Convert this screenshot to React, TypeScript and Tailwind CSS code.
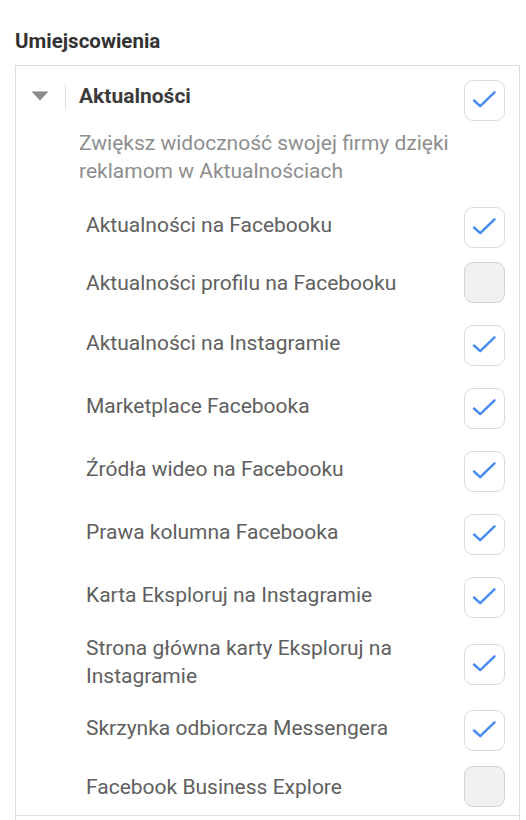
import React from "react";

interface Placement {
  label: string;
  checked: boolean;
  height: string;
}

const placements: Placement[] = [
  { label: "Aktualności na Facebooku", checked: true, height: "h-[47px]" },
  { label: "Aktualności profilu na Facebooku", checked: false, height: "h-[63px]" },
  { label: "Aktualności na Instagramie", checked: true, height: "h-[63px]" },
  { label: "Marketplace Facebooka", checked: true, height: "h-[63px]" },
  { label: "Źródła wideo na Facebooku", checked: true, height: "h-[63px]" },
  { label: "Prawa kolumna Facebooka", checked: true, height: "h-[63px]" },
  { label: "Karta Eksploruj na Instagramie", checked: true, height: "h-[63px]" },
  { label: "Strona główna karty Eksploruj na Instagramie", checked: true, height: "h-[70px]" },
  { label: "Skrzynka odbiorcza Messengera", checked: true, height: "h-[63px]" },
  { label: "Facebook Business Explore", checked: false, height: "h-[49px]" },
];

function Checkbox({ checked }: { checked: boolean }) {
  if (!checked) {
    return <div className="w-[41px] h-[41px] shrink-0 rounded-[9px] border border-[#d2d2d2] bg-[#f1f1f1]" />;
  }
  return (
    <div className="w-[41px] h-[41px] shrink-0 rounded-[9px] border border-[#dcdcdc] bg-white flex items-center justify-center">
      <svg width="41" height="41" viewBox="0 0 41 41" fill="none">
        <path
          d="M9.5 20.5 L16 26.5 L31 12"
          stroke="#4a8cf3"
          strokeWidth="2.6"
          strokeLinecap="round"
          strokeLinejoin="round"
        />
      </svg>
    </div>
  );
}

export default function App() {
  return (
    <div className="bg-white min-h-[820px] pt-[27px] font-['Roboto',sans-serif]">
      <h2 className="pl-[15px] text-[20.5px] leading-[29px] font-bold text-[#333333]">Umiejscowienia</h2>

      <div className="mt-[9px] ml-[15px] w-[505px] border-x border-t border-[#dddddd]">
        <div className="border-b border-[#dddddd] pl-[15px] pr-[14px] pt-[14px] pb-[4px]">
          {/* Header row */}
          <div className="flex items-start justify-between">
            <div className="flex items-center h-[28px] mt-[3px]">
              <svg width="18" height="10" viewBox="0 0 18 10" className="mt-[-2px]">
                <path d="M0.5 0.5 H17.5 L9 9.5 Z" fill="#8c8c8c" />
              </svg>
              <div className="ml-[16px] w-px h-[24px] bg-[#dddddd]" />
              <span className="ml-[13px] text-[21px] font-bold text-[#3c3c3c]">Aktualności</span>
            </div>
            <Checkbox checked />
          </div>

          <p className="mt-[8px] ml-[48px] w-[395px] text-[21px] leading-[28px] text-[#8e8e8e]">
            Zwiększ widoczność swojej firmy dzięki reklamom w Aktualnościach
          </p>

          {/* Placements */}
          <div className="mt-[19px] ml-[55px]">
            {placements.map((p) => (
              <div key={p.label} className={`flex items-center justify-between ${p.height}`}>
                <span
                  className={`flex-1 pr-[30px] text-[21px] leading-[28px] text-[#606060] ${p.checked ? "mb-[5px]" : "mb-0"}`}
                >
                  {p.label}
                </span>
                <Checkbox checked={p.checked} />
              </div>
            ))}
          </div>
        </div>
        <div className="h-[40px]" />
      </div>
    </div>
  );
}
